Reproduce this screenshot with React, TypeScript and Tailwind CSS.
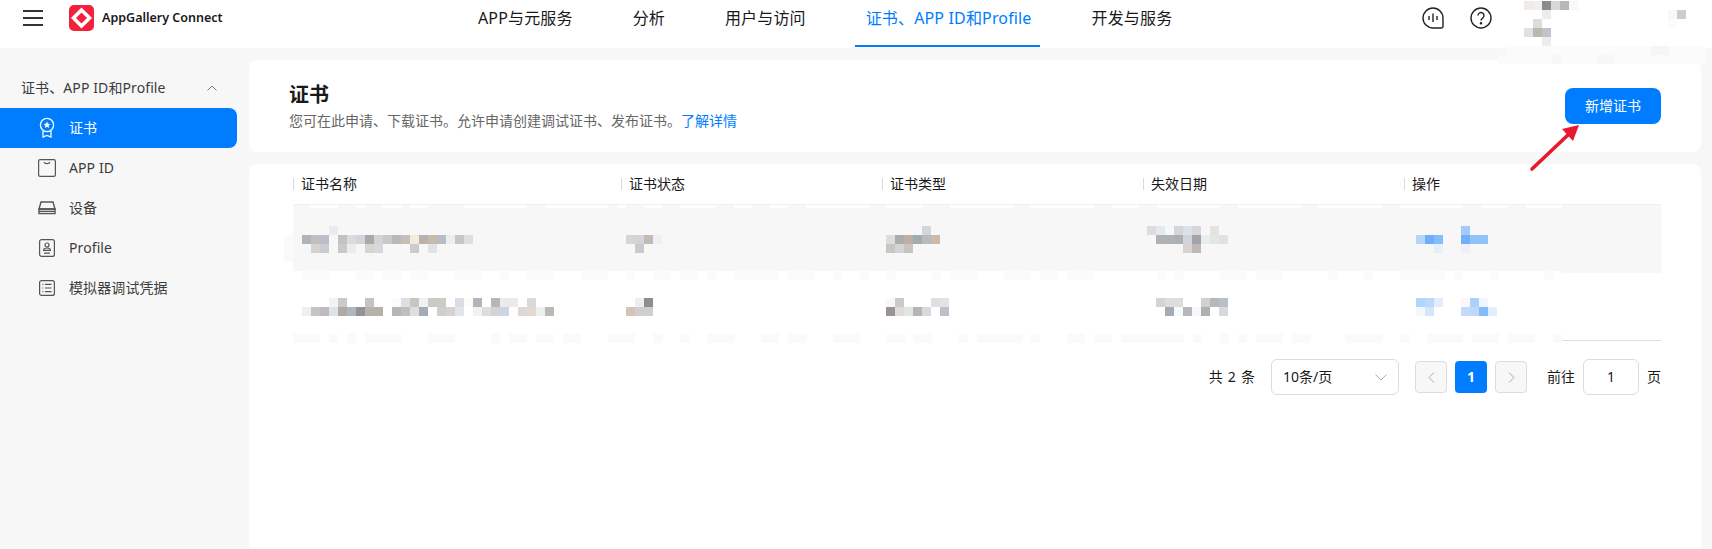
import React from "react";

type Line = string[];

function Mosaic({ lines, className = "" }: { lines: Line[]; className?: string }) {
  const cols = Math.max(...lines.map((l) => l.length));
  return (
    <svg width={cols * 9} height={lines.length * 9} className={"block " + className} shapeRendering="crispEdges">
      {lines.map((l, y) => l.map((c, x) => (c ? <rect key={x + "-" + y} x={x * 9} y={y * 9} width={9} height={9} fill={c} /> : null)))}
    </svg>
  );
}

const BAND_334: [number, number][] = [[1,3],[5,5],[7,7],[9,12],[16,18],[23,23],[25,26],[28,29],[31,32],[36,38],[41,41],[44,44],[47,49],[53,54],[56,57],[61,63],[67,68],[70,71],[75,75],[77,81],[83,83],[87,88],[90,91],[93,99],[101,101],[104,104],[106,106],[108,110],[112,113],[118,121],[124,124],[127,130],[132,134],[136,138],[141,141]];
const BAND_271: [number, number][] = [[2,4],[8,9],[11,12],[14,15],[19,21],[24,24],[27,29],[33,35],[38,38],[41,42],[44,45],[47,47],[50,52],[53,54],[56,58],[61,61],[64,64],[67,67],[72,72],[74,76],[80,82],[84,85],[87,89],[97,97],[99,99],[104,106],[108,110],[116,116],[120,120],[124,128],[130,130],[134,134],[140,140]];
const BAND_205: [number, number][] = [[3,5],[8,8],[11,12],[14,15],[20,26],[29,35],[37,37],[40,41],[44,47],[50,51],[54,55],[58,64],[67,70],[74,80],[83,89],[92,94],[97,103],[106,112],[115,121],[124,130],[133,135],[138,141]];

function Bands() {
  return (
    <svg className="absolute left-[284px] top-[205px]" width={1278} height={138} shapeRendering="crispEdges">
      <rect x={0} y={30} width={9} height={27} fill="#fafafa" />
      <rect x={9} y={0} width={1269} height={3} fill="#f7f7f7" />
      {BAND_205.map(([a, b]) => <rect key={"t" + a} x={a * 9} y={0} width={(b - a + 1) * 9} height={3} fill="#ffffff" />)}
      <rect x={9} y={66} width={1269} height={9} fill="#ffffff" />
      {BAND_271.map(([a, b]) => <rect key={"m" + a} x={a * 9} y={66} width={(b - a + 1) * 9} height={9} fill="#fbfbfb" />)}
      <rect x={9} y={129} width={1269} height={9} fill="#ffffff" />
      {BAND_334.map(([a, b]) => <rect key={"b" + a} x={a * 9} y={129} width={(b - a + 1) * 9} height={9} fill="#fafafa" />)}
    </svg>
  );
}

const S = "currentColor";

function CertIcon() {
  return (
    <svg width="18" height="22" viewBox="0 0 18 22" fill="none" stroke={S} strokeWidth="1.3">
      <circle cx="9" cy="8" r="6.6" />
      <path d="M9 4.6l1 2.2 2.4.2-1.8 1.6.6 2.4L9 9.8 6.8 11l.6-2.4L5.6 7l2.4-.2z" fill={S} stroke="none" />
      <path d="M5 14v6l4-1.6 4 1.6v-6" />
    </svg>
  );
}
function AppIdIcon() {
  return (
    <svg width="18" height="18" viewBox="0 0 18 18" fill="none" stroke={S} strokeWidth="1.2">
      <rect x="0.6" y="0.6" width="16.8" height="16.8" rx="1.6" />
      <path d="M6 3.2c.6 2 5.4 2 6 0" />
    </svg>
  );
}
function DeviceIcon() {
  return (
    <svg width="18" height="14" viewBox="0 0 18 14" fill="none" stroke={S} strokeWidth="1.4">
      <path d="M3 1h12l2 7H1z" />
      <path d="M1 8h16v4.6H1z" />
      <path d="M1 10.4h16" />
    </svg>
  );
}
function ProfileIcon() {
  return (
    <svg width="16" height="18" viewBox="0 0 16 18" fill="none" stroke={S} strokeWidth="1.2">
      <rect x="0.6" y="0.6" width="14.8" height="16.8" rx="2" />
      <circle cx="8" cy="6" r="2" />
      <path d="M4.5 11.4c0-1.6 1.5-2.4 3.5-2.4s3.5.8 3.5 2.4zM5 14.2h6" />
    </svg>
  );
}
function ListIcon() {
  return (
    <svg width="16" height="16" viewBox="0 0 16 16" fill="none" stroke={S} strokeWidth="1.2">
      <rect x="0.6" y="0.6" width="14.8" height="14.8" rx="2" />
      <path d="M3.4 4.4h1M6 4.4h6.6M3.4 8h1M6 8h6.6M3.4 11.6h1M6 11.6h6.6" />
    </svg>
  );
}

function SideItem({ icon, label, active }: { icon: React.ReactNode; label: string; active?: boolean }) {
  return (
    <div className={"flex h-10 items-center pl-[38px] text-sm tracking-[0.1px] " + (active ? "rounded-r-lg bg-[#007dff] text-white" : "text-[#3d3d3d]")}>
      <span className={"flex w-[18px] justify-center " + (active ? "text-white" : "text-[#555555]")}>{icon}</span>
      <span className="ml-[13px]">{label}</span>
    </div>
  );
}

function HeaderCell({ label, className }: { label: string; className: string }) {
  return (
    <div className={"flex items-center " + className}>
      <span className="h-3 w-px bg-[#dcdcdc]" />
      <span className="ml-[7px] text-sm text-[#191919]">{label}</span>
    </div>
  );
}

const COLS = ["w-[328px] pl-[9px]", "w-[261px] pl-[5px]", "w-[261px] pl-[4px]", "w-[261px] pl-[4px]", "w-[257px] pl-[12px]"];

const ROW1: Line[][] = [
  [
    ["", "", "", "#e9ecec"],
    ["#aeb4bc","#c0bebf","#bcbccb","","#c5c1bf","#d9dbdf","#d3d3da","#a9a9ab","#d3d3d9","#c9c7ca","#b9b9bc","#c2bfbd","#f5e8dc","#b5b2af","#c8b9a8","#b9bcc0","#eeeeea","#c6c6c6","#dcdfe2"],
    ["","#d5d2d0","#c9ccd0","","#c9c9cd","#e8ecec","","#d8d4d2","#d8d7da","","","","#cbcbcd","","#dfe3e6"],
  ],
  [[""], ["#d9d4cf","#d3d3d8","#c3bab4","#eceff3"], ["","#cacace"]],
  [
    ["","","","","#d3d6db"],
    ["#e0dcd9","#adadad","#bdaea6","#9fadb0","#bbb9bc","#ccb9aa"],
    ["#c8c7c2","#d3d3da","#cac4c0"],
  ],
  [
    ["#e0dbd8","#e6e9ec","","#d3d7db","#dde0e8","#d8d7d7","","#e5e2e0"],
    ["","#afb2b7","#acb3b8","#adb0b3","#cfd3de","#a4a4a4","#e6eef2","#e3e7e3","#e3e0dd"],
    ["","","","","#d8d3d0","#bdb9b6"],
  ],
  [
    ["","","","","","#a3cafb"],
    ["#b5d4f7","#6eaefc","#85bdfb","","","#70b0fb","#90c3fb","#90c3fb"],
    ["","","#e6f0fa","","","#f1f0fa"],
  ],
];

const ROW2: Line[][] = [
  [
    ["","","","#eff4f6","#cdc9c6","","","#bfc6c3","","","#fefaf7","#dbe1e3","#c9c5bf","#eef2f5","#cdc9c5","#cdcbc6","","#dcdde4","#fdfbf8","#b3b3ba","","#b7b7b9","#e8ecf2","#efe8e4","","#dbd9d5"],
    ["#f1efeb","#c2c6c5","#bdbbc1","#dfe3e6","#aeaba7","#adb7bc","#929298","#b6b3ad","#b4b2a6","","#b6b6b6","#c1bfbd","#dedede","#a4abb3","","#d0cfcb","#d6d3d0","#e1e4ec","","#f3f2ee","#dddddd","#d3d4d8","#cdd5e1","","#dbd9d5","#e3d9d1","#eef0f0","#bcb9b5"],
  ],
  [["","#eeeeee","#8b8f92"], ["#d1c5b9","#cfcfcf","#cfcfcf"]],
  [
    ["#fcf7f3","#cacaca","","","","#e0dfdd","#dde5ec"],
    ["#969593","#dfdcd8","#dfe7e3","#b6b5b3","#d7dadd","","#bfc0c5"],
  ],
  [
    ["","#d6d4d2","#dfdcd9","#dfdcd9","","","#d3d1ce","#b5b8bc","#b9bfca"],
    ["","","#a5abb2","#f6fafb","#b6b6bb","#f5f9fb","#adb1b3","","#d7dadd"],
  ],
  [
    ["#b4d5fb","#bcd8fb","#e0edfd","","","#fcf6fd","#acd0fb","#eef6fe"],
    ["#f3f8fe","#d3e6fb","","","","#c3dafb","#bcd8fb","#83bbfb","#e2eefd"],
  ],
];

function Row({ cells, className }: { cells: Line[][]; className: string }) {
  return (
    <div className={"flex h-[68px] " + className}>
      {cells.map((c, i) => (
        <div key={i} className={COLS[i]}>
          <Mosaic lines={c} />
        </div>
      ))}
    </div>
  );
}

const NAV = ["APP与元服务", "分析", "用户与访问", "证书、APP ID和Profile", "开发与服务"];

function PageButton({ children, active }: { children: React.ReactNode; active?: boolean }) {
  return (
    <div className={"flex h-8 w-8 items-center justify-center rounded " + (active ? "bg-[#007dff] font-bold text-white" : "border border-[#dcdcdc] bg-[#f7f7f7] text-[#a8a8a8]")}>
      {children}
    </div>
  );
}

export default function App() {
  return (
    <div className="relative flex h-[549px] w-[1712px] flex-col overflow-hidden bg-[#f7f7f7] font-['Noto_Sans','Noto_Sans_CJK_SC',sans-serif] text-[#191919]">
      <header className="relative flex h-12 shrink-0 bg-white pb-[12px]">
        <div className="flex w-[478px] items-center">
          <div className="ml-[23px] flex w-5 flex-col gap-[5px]">
            <span className="h-0.5 bg-[#333333]" />
            <span className="h-0.5 bg-[#333333]" />
            <span className="h-0.5 bg-[#333333]" />
          </div>
          <svg className="ml-[26px]" width="25" height="26" viewBox="0 0 25 26">
            <rect width="25" height="26" rx="5" fill="#f5213c" />
            <path d="M12.5 5 20.5 13l-8 8-8-8z" fill="none" stroke="#ffffff" strokeWidth="3.6" />
          </svg>
          <span className="ml-[8px] text-[12.5px] font-semibold text-[#191919]">AppGallery Connect</span>
        </div>
        <nav className="flex items-center gap-[60px] text-base tracking-[0.15px]">
          {NAV.map((n, i) => (
            <span key={n} className={i === 3 ? "text-[#007dff]" : "text-[#191919]"}>
              {n}
            </span>
          ))}
        </nav>
        <span className="absolute left-[855px] top-[45px] h-0.5 w-[185px] bg-[#007dff]" />
        <div className="absolute left-[1422px] top-[7px] flex gap-[26px] text-[#222222]">
          <svg width="22" height="22" viewBox="0 0 22 22" fill="none" stroke="currentColor" strokeWidth="1.4">
            <path d="M11 1a10 10 0 1 0 0 20h8.2a1.8 1.8 0 0 0 1.8-1.8V11A10 10 0 0 0 11 1z" />
            <path d="M7 9v4M11 6.5v8.5M15 9v4" />
          </svg>
          <svg width="22" height="22" viewBox="0 0 22 22" fill="none" stroke="currentColor" strokeWidth="1.4">
            <circle cx="11" cy="11" r="10" />
            <path d="M8 8.6a3 3 0 1 1 4.6 2.5c-1 .7-1.6 1.2-1.6 2.4" />
            <circle cx="11" cy="16.2" r="0.6" fill="currentColor" />
          </svg>
        </div>
        <Mosaic
          className="absolute left-[1524px] top-px"
          lines={[
            ["#f0ebe8","#f2efed","#8c8c8c","#d8d8d8","#b6b7ba","#f8f8f8"],
            ["","","#ececec"],
            ["","#dddddd"],
            ["#e3e1de","#bdb7b2","#c0c4ce"],
            ["","","#ececec"],
          ]}
        />
        <Mosaic className="absolute left-[1668px] top-[10px]" lines={[["#f8f8f8", "#cdcdcd"], ["#fbfbfb"]]} />
      </header>

      <div className="flex min-h-0 flex-1">
        <aside className="w-[237px] shrink-0 pt-5">
          <div className="flex h-10 items-center justify-between pl-[21px] pr-[20px] text-sm tracking-[0.1px] text-[#3d3d3d]">
            <span>证书、APP ID和Profile</span>
            <svg width="10" height="6" viewBox="0 0 10 6" fill="none" stroke="#777777" strokeWidth="1">
              <path d="M.5 5.5 5 1l4.5 4.5" />
            </svg>
          </div>
          <SideItem active icon={<CertIcon />} label="证书" />
          <SideItem icon={<AppIdIcon />} label="APP ID" />
          <SideItem icon={<DeviceIcon />} label="设备" />
          <SideItem icon={<ProfileIcon />} label="Profile" />
          <SideItem icon={<ListIcon />} label="模拟器调试凭据" />
        </aside>

        <main className="ml-3 mr-[11px] mt-3 flex min-w-0 flex-1 flex-col gap-3">
          <section className="flex h-[92px] shrink-0 items-start justify-between rounded-lg bg-white pl-10 pr-10 pt-[22px]">
            <div>
              <h1 className="text-xl leading-[26px] font-bold text-[#191919]">证书</h1>
              <p className="mt-[3px] text-sm leading-5 text-[#666666]">
                您可在此申请、下载证书。允许申请创建调试证书、发布证书。<span className="text-[#007dff]">了解详情</span>
              </p>
            </div>
            <button className="mt-[6px] h-9 w-24 rounded-lg bg-[#007dff] text-sm text-white">新增证书</button>
          </section>

          <section className="flex-1 rounded-t-lg bg-white pl-[44px] pr-10">
            <div className="flex h-[41px] items-center border-b border-[#f0f0f0]">
              <HeaderCell label="证书名称" className="w-[328px]" />
              <HeaderCell label="证书状态" className="w-[261px]" />
              <HeaderCell label="证书类型" className="w-[261px]" />
              <HeaderCell label="失效日期" className="w-[261px]" />
              <HeaderCell label="操作" className="w-[257px]" />
            </div>
            <Row cells={ROW1} className="bg-[#f7f7f7] pt-[21px]" />
            <Row cells={ROW2} className="border-b border-[#dfdfdf] pt-[25px]" />
            <div className="mt-[18px] flex items-center justify-end text-sm text-[#191919]">
              <span className="[word-spacing:1.5px]">共 2 条</span>
              <div className="ml-4 flex h-9 w-32 items-center justify-between rounded-md border border-[#dcdcdc] pl-[11px] pr-[11px]">
                <span>10条/页</span>
                <svg width="12" height="7" viewBox="0 0 12 7" fill="none" stroke="#aaaaaa" strokeWidth="1">
                  <path d="M.5.5 6 6 11.5.5" />
                </svg>
              </div>
              <div className="ml-4 flex gap-2">
                <PageButton>
                  <svg width="7" height="11" viewBox="0 0 7 11" fill="none" stroke="currentColor" strokeWidth="1"><path d="M6 .5 1 5.5l5 5" /></svg>
                </PageButton>
                <PageButton active>1</PageButton>
                <PageButton>
                  <svg width="7" height="11" viewBox="0 0 7 11" fill="none" stroke="currentColor" strokeWidth="1"><path d="m1 .5 5 5-5 5" /></svg>
                </PageButton>
              </div>
              <span className="ml-5">前往</span>
              <div className="ml-2 flex h-9 w-14 items-center justify-center rounded-md border border-[#dcdcdc]">1</div>
              <span className="ml-2">页</span>
            </div>
          </section>
        </main>
      </div>

      <Bands />
      <svg className="absolute left-[1498px] top-[46px]" width="207" height="18" shapeRendering="crispEdges">
        <rect x="0" y="9" width="207" height="9" fill="#fbfbfb" />
        <rect x="9" y="0" width="198" height="9" fill="#fbfbfb" />
        <rect x="54" y="9" width="9" height="9" fill="#f7f7f7" />
        <rect x="99" y="9" width="18" height="9" fill="#f7f7f7" />
        <rect x="153" y="0" width="18" height="9" fill="#f6f6f6" />
      </svg>
      <svg className="absolute left-[1525px] top-[120px]" width="60" height="54" viewBox="0 0 60 54" fill="none">
        <path d="M7 49 44 14" stroke="#e8192c" strokeWidth="3.6" strokeLinecap="round" />
        <path d="M54 5 37 9 48 21z" fill="#e8192c" />
      </svg>
    </div>
  );
}
